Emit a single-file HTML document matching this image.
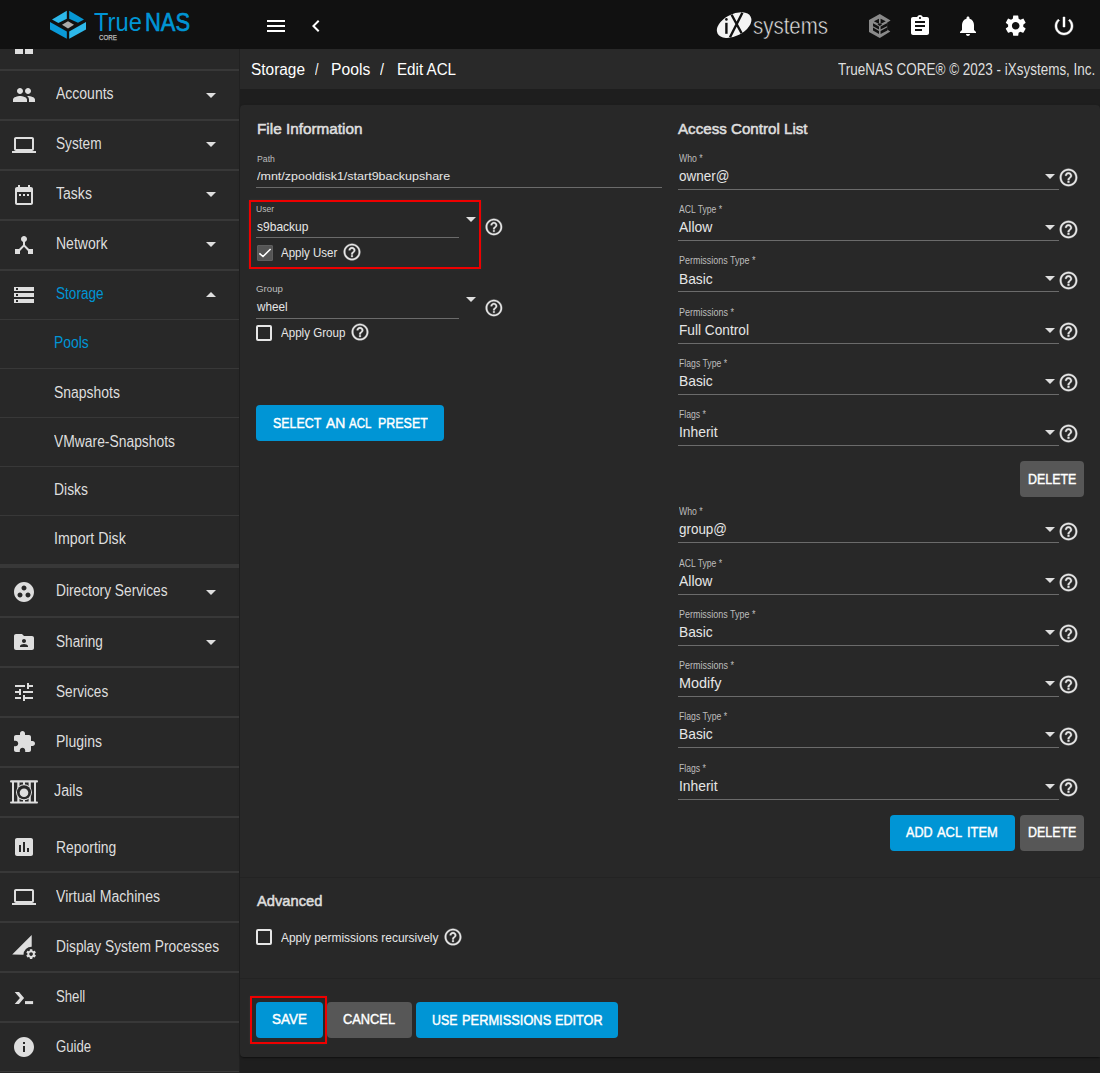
<!DOCTYPE html>
<html><head><meta charset="utf-8">
<style>
html,body{margin:0;padding:0;width:1100px;height:1073px;overflow:hidden;background:#1e1e1e;}
body{position:relative;font-family:"Liberation Sans",sans-serif;}
.t{position:absolute;white-space:nowrap;transform-origin:0 0;}
.b{position:absolute;}
.i{position:absolute;overflow:visible;}
</style></head><body>
<div class="b" style="left:0px;top:0px;width:1100px;height:1073px;background:#1e1e1e;"></div>
<div class="b" style="left:0px;top:48px;width:239px;height:1025px;background:#282828;"></div>
<div class="b" style="left:239px;top:48px;width:1px;height:1025px;background:#212121;"></div>
<div class="b" style="left:240px;top:48px;width:860px;height:41px;background:#292929;"></div>
<div class="b" style="left:240px;top:105px;width:860px;height:952px;background:#282828;border-radius:4px 4px 0 4px;box-shadow:0 2px 1px -1px rgba(0,0,0,.2),0 1px 1px 0 rgba(0,0,0,.14),0 1px 3px 0 rgba(0,0,0,.12);"></div>
<div class="b" style="left:0px;top:69px;width:239px;height:2px;background:#383838;"></div>
<div class="b" style="left:0px;top:119px;width:239px;height:2px;background:#383838;"></div>
<div class="b" style="left:0px;top:169px;width:239px;height:2px;background:#383838;"></div>
<div class="b" style="left:0px;top:219px;width:239px;height:2px;background:#383838;"></div>
<div class="b" style="left:0px;top:269px;width:239px;height:2px;background:#383838;"></div>
<div class="b" style="left:0px;top:616px;width:239px;height:2px;background:#383838;"></div>
<div class="b" style="left:0px;top:666px;width:239px;height:2px;background:#383838;"></div>
<div class="b" style="left:0px;top:716px;width:239px;height:2px;background:#383838;"></div>
<div class="b" style="left:0px;top:766px;width:239px;height:2px;background:#383838;"></div>
<div class="b" style="left:0px;top:816px;width:239px;height:2px;background:#383838;"></div>
<div class="b" style="left:0px;top:871px;width:239px;height:2px;background:#383838;"></div>
<div class="b" style="left:0px;top:921px;width:239px;height:2px;background:#383838;"></div>
<div class="b" style="left:0px;top:971px;width:239px;height:2px;background:#383838;"></div>
<div class="b" style="left:0px;top:1021px;width:239px;height:2px;background:#383838;"></div>
<div class="b" style="left:0px;top:319px;width:239px;height:1px;background:#383838;"></div>
<div class="b" style="left:0px;top:368px;width:239px;height:1px;background:#383838;"></div>
<div class="b" style="left:0px;top:417px;width:239px;height:1px;background:#383838;"></div>
<div class="b" style="left:0px;top:466px;width:239px;height:1px;background:#383838;"></div>
<div class="b" style="left:0px;top:515px;width:239px;height:1px;background:#383838;"></div>
<div class="b" style="left:0px;top:1071px;width:239px;height:1px;background:#383838;"></div>
<div class="b" style="left:0px;top:1072px;width:239px;height:1px;background:#252525;"></div>
<div class="b" style="left:0px;top:564px;width:239px;height:4px;background:#383838;"></div>
<svg class="i" style="left:12px;top:33px;width:24px;height:24px;" viewBox="0 0 24 24"><path fill="#dedede" d="M3 13h8V3H3v10zm0 8h8v-6H3v6zm10 0h8V11h-8v10zm0-18v6h8V3h-8z"/></svg>
<svg class="i" style="left:12px;top:82.6px;width:24px;height:24px;" viewBox="0 0 24 24"><path fill="#dedede" d="M16 11c1.66 0 2.99-1.34 2.99-3S17.66 5 16 5c-1.66 0-3 1.34-3 3s1.34 3 3 3zm-8 0c1.66 0 2.99-1.34 2.99-3S9.66 5 8 5C6.34 5 5 6.34 5 8s1.34 3 3 3zm0 2c-2.33 0-7 1.17-7 3.5V19h14v-2.5c0-2.33-4.67-3.5-7-3.5zm8 0c-.29 0-.62.02-.97.05 1.16.84 1.97 1.97 1.97 3.45V19h6v-2.5c0-2.33-4.67-3.5-7-3.5z"/></svg>
<div class="t" style="left:56.30px;top:84px;font-size:15.80px;line-height:19px;color:#dedede;transform:scaleX(0.8861);">Accounts</div>
<svg class="i" style="left:206px;top:93px;width:10px;height:5px" viewBox="0 0 10 5"><path fill="#dedede" d="M0 0h10L5 5z"/></svg>
<svg class="i" style="left:12px;top:133px;width:24px;height:24px;" viewBox="0 0 24 24"><path fill="#dedede" d="M20 18c1.1 0 1.99-.9 1.99-2L22 6c0-1.1-.9-2-2-2H4c-1.1 0-2 .9-2 2v10c0 1.1.9 2 2 2H0v2h24v-2h-4zM4 6h16v10H4V6z"/></svg>
<div class="t" style="left:56.40px;top:134px;font-size:15.80px;line-height:19px;color:#dedede;transform:scaleX(0.8655);">System</div>
<svg class="i" style="left:206px;top:142px;width:10px;height:5px" viewBox="0 0 10 5"><path fill="#dedede" d="M0 0h10L5 5z"/></svg>
<svg class="i" style="left:12px;top:183px;width:24px;height:24px;" viewBox="0 0 24 24"><path fill="#dedede" d="M9 11H7v2h2v-2zm4 0h-2v2h2v-2zm4 0h-2v2h2v-2zm2-7h-1V2h-2v2H8V2H6v2H5c-1.11 0-1.99.9-1.99 2L3 20c0 1.1.89 2 2 2h14c1.1 0 2-.9 2-2V6c0-1.1-.9-2-2-2zm0 16H5V9h14v11z"/></svg>
<div class="t" style="left:56.40px;top:184px;font-size:15.80px;line-height:19px;color:#dedede;transform:scaleX(0.8895);">Tasks</div>
<svg class="i" style="left:206px;top:192px;width:10px;height:5px" viewBox="0 0 10 5"><path fill="#dedede" d="M0 0h10L5 5z"/></svg>
<svg class="i" style="left:12px;top:233px;width:24px;height:24px;" viewBox="0 0 24 24"><path fill="#dedede" d="M17 16l-4-4V8.82C14.16 8.4 15 7.3 15 6c0-1.66-1.34-3-3-3S9 4.34 9 6c0 1.3.84 2.4 2 2.82V12l-4 4H3v5h5v-3.05l4-4.2 4 4.2V21h5v-5h-4z"/></svg>
<div class="t" style="left:56.40px;top:234px;font-size:15.80px;line-height:19px;color:#dedede;transform:scaleX(0.8871);">Network</div>
<svg class="i" style="left:206px;top:242px;width:10px;height:5px" viewBox="0 0 10 5"><path fill="#dedede" d="M0 0h10L5 5z"/></svg>
<svg class="i" style="left:12px;top:283px;width:24px;height:24px;" viewBox="0 0 24 24"><path fill="#dedede" d="M2 20h20v-4H2v4zm2-3h2v2H4v-2zM2 4v4h20V4H2zm4 3H4V5h2v2zm-4 7h20v-4H2v4zm2-3h2v2H4v-2z"/></svg>
<div class="t" style="left:56.40px;top:284px;font-size:15.80px;line-height:19px;color:#0095d5;transform:scaleX(0.8597);">Storage</div>
<svg class="i" style="left:206px;top:292px;width:10px;height:5px" viewBox="0 0 10 5"><path fill="#dedede" d="M0 5h10L5 0z"/></svg>
<svg class="i" style="left:12px;top:580px;width:24px;height:24px;" viewBox="0 0 24 24"><path fill="#dedede" d="M12 2C6.48 2 2 6.48 2 12s4.48 10 10 10 10-4.48 10-10S17.52 2 12 2zM8 17.5c-1.38 0-2.5-1.120-2.5-2.5s1.12-2.5 2.5-2.5 2.5 1.12 2.5 2.5-1.12 2.5-2.5 2.5zM9.5 8c0-1.38 1.12-2.5 2.5-2.5s2.5 1.12 2.5 2.5-1.12 2.5-2.5 2.5S9.5 9.38 9.5 8zm6.5 9.5c-1.38 0-2.5-1.12-2.5-2.5s1.12-2.5 2.5-2.5 2.5 1.12 2.5 2.5-1.12 2.5-2.5 2.5z"/></svg>
<div class="t" style="left:56.00px;top:581px;font-size:15.80px;line-height:19px;color:#dedede;transform:scaleX(0.8706);">Directory Services</div>
<svg class="i" style="left:206px;top:590px;width:10px;height:5px" viewBox="0 0 10 5"><path fill="#dedede" d="M0 0h10L5 5z"/></svg>
<svg class="i" style="left:12px;top:629.5px;width:24px;height:24px;" viewBox="0 0 24 24"><path fill="#dedede" d="M20 6h-8l-2-2H4c-1.1 0-1.99.9-1.99 2L2 18c0 1.1.9 2 2 2h16c1.1 0 2-.9 2-2V8c0-1.1-.9-2-2-2zm-8 3c1.1 0 2 .9 2 2s-.9 2-2 2-2-.9-2-2 .9-2 2-2zm4 8H8v-1c0-1.33 2.67-2 4-2s4 .67 4 2v1z"/></svg>
<div class="t" style="left:56.00px;top:632px;font-size:15.80px;line-height:19px;color:#dedede;transform:scaleX(0.8618);">Sharing</div>
<svg class="i" style="left:206px;top:640px;width:10px;height:5px" viewBox="0 0 10 5"><path fill="#dedede" d="M0 0h10L5 5z"/></svg>
<svg class="i" style="left:12px;top:679.6px;width:24px;height:24px;" viewBox="0 0 24 24"><path fill="#dedede" d="M3 17v2h6v-2H3zM3 5v2h10V5H3zm10 16v-2h8v-2h-8v-2h-2v6h2zM7 9v2H3v2h4v2h2V9H7zm14 4v-2H11v2h10zm-6-4h2V7h4V5h-4V3h-2v6z"/></svg>
<div class="t" style="left:56.00px;top:682px;font-size:15.80px;line-height:19px;color:#dedede;transform:scaleX(0.8616);">Services</div>
<svg class="i" style="left:12px;top:729.6px;width:24px;height:24px;" viewBox="0 0 24 24"><path fill="#dedede" d="M20.5 11H19V7c0-1.1-.9-2-2-2h-4V3.5C13 2.12 11.88 1 10.5 1S8 2.12 8 3.5V5H4c-1.1 0-1.99.9-1.99 2v3.8H3.5c1.49 0 2.7 1.21 2.7 2.7s-1.21 2.7-2.7 2.7H2V20c0 1.1.9 2 2 2h3.8v-1.5c0-1.49 1.21-2.7 2.7-2.7 1.49 0 2.7 1.21 2.7 2.7V22H17c1.1 0 2-.9 2-2v-4h1.5c1.38 0 2.5-1.12 2.5-2.5S21.88 11 20.5 11z"/></svg>
<div class="t" style="left:56.00px;top:732px;font-size:15.80px;line-height:19px;color:#dedede;transform:scaleX(0.8878);">Plugins</div>
<div class="t" style="left:54.30px;top:781px;font-size:15.80px;line-height:19px;color:#dedede;transform:scaleX(0.9052);">Jails</div>
<svg class="i" style="left:12px;top:834.5px;width:24px;height:24px;" viewBox="0 0 24 24"><path fill="#dedede" d="M19 3H5c-1.1 0-2 .9-2 2v14c0 1.1.9 2 2 2h14c1.1 0 2-.9 2-2V5c0-1.1-.9-2-2-2zM9 17H7v-7h2v7zm4 0h-2V7h2v10zm4 0h-2v-4h2v4z"/></svg>
<div class="t" style="left:56.00px;top:838px;font-size:15.80px;line-height:19px;color:#dedede;transform:scaleX(0.8805);">Reporting</div>
<svg class="i" style="left:12px;top:884.5px;width:24px;height:24px;" viewBox="0 0 24 24"><path fill="#dedede" d="M20 18c1.1 0 1.99-.9 1.99-2L22 6c0-1.1-.9-2-2-2H4c-1.1 0-2 .9-2 2v10c0 1.1.9 2 2 2H0v2h24v-2h-4zM4 6h16v10H4V6z"/></svg>
<div class="t" style="left:56.00px;top:887px;font-size:15.80px;line-height:19px;color:#dedede;transform:scaleX(0.8935);">Virtual Machines</div>
<div class="t" style="left:56.30px;top:937px;font-size:15.80px;line-height:19px;color:#dedede;transform:scaleX(0.8719);">Display System Processes</div>
<div class="t" style="left:56.30px;top:987px;font-size:15.80px;line-height:19px;color:#dedede;transform:scaleX(0.8336);">Shell</div>
<svg class="i" style="left:12px;top:1035px;width:24px;height:24px;" viewBox="0 0 24 24"><path fill="#dedede" d="M12 2C6.48 2 2 6.48 2 12s4.48 10 10 10 10-4.48 10-10S17.52 2 12 2zm1 15h-2v-6h2v6zm0-8h-2V7h2v2z"/></svg>
<div class="t" style="left:56.30px;top:1037px;font-size:15.80px;line-height:19px;color:#dedede;transform:scaleX(0.8346);">Guide</div>
<svg class="i" style="left:0;top:770px;width:48px;height:44px" viewBox="0 770 48 44"><rect x="10" y="780.3" width="28" height="2.1" rx="1" fill="#dedede"/><rect x="10" y="801.5" width="28" height="2.1" rx="1" fill="#dedede"/><rect x="12" y="782" width="2" height="20" fill="#dedede"/><rect x="17.3" y="782" width="2.2" height="20" fill="#dedede"/><rect x="23" y="782" width="2" height="20" fill="#dedede"/><rect x="28.6" y="782" width="2.2" height="20" fill="#dedede"/><rect x="34" y="782" width="2" height="20" fill="#dedede"/><circle cx="24" cy="792.3" r="8" fill="#dedede"/><circle cx="24" cy="792.3" r="7" fill="#282828"/><circle cx="24" cy="792.7" r="4.3" fill="#dedede"/></svg>
<svg class="i" style="left:8px;top:930px;width:32px;height:32px" viewBox="0 0 32 32"><path fill="#dedede" d="M4.2 24.6L23.7 4.9V16.7A8 8 0 0 0 15.5 24.7Z"/></svg>
<svg class="i" style="left:24.9px;top:947.8px;width:12.2px;height:12.2px;" viewBox="0 0 24 24"><path fill="#dedede" d="M19.14 12.94c.04-.3.06-.61.06-.94 0-.32-.02-.64-.07-.94l2.03-1.58c.18-.14.23-.41.12-.61l-1.92-3.32c-.12-.22-.37-.29-.59-.22l-2.39.96c-.5-.38-1.03-.7-1.62-.94l-.36-2.54c-.04-.24-.24-.41-.48-.41h-3.84c-.24 0-.43.17-.47.41l-.36 2.54c-.59.24-1.13.57-1.62.94l-2.39-.96c-.22-.08-.47 0-.59.22L2.740 8.870c-.12.21-.08.47.12.61l2.03 1.58c-.05.3-.09.63-.09.94s.02.64.07.94l-2.03 1.58c-.18.14-.23.41-.12.61l1.92 3.32c.12.22.37.29.59.22l2.39-.96c.5.38 1.03.7 1.62.94l.36 2.54c.05.24.24.41.48.41h3.84c.24 0 .44-.17.47-.41l.36-2.54c.59-.24 1.13-.56 1.62-.94l2.39.96c.22.08.47 0 .59-.22l1.92-3.32c.12-.22.07-.47-.12-.61l-2.01-1.58zM12 15.6c-1.98 0-3.6-1.62-3.6-3.6s1.62-3.6 3.6-3.6 3.6 1.62 3.6 3.6-1.62 3.6-3.6 3.6z"/></svg>
<svg class="i" style="left:8px;top:982px;width:32px;height:32px" viewBox="0 0 32 32"><path fill="#dedede" d="M6.7 10.1H11L16.1 16L11 21.9H6.7L11.9 16Z"/><rect x="17" y="19.1" width="8.1" height="3" fill="#dedede"/></svg>
<div class="t" style="left:54.00px;top:333px;font-size:15.80px;line-height:19px;color:#0095d5;transform:scaleX(0.8812);">Pools</div>
<div class="t" style="left:54.00px;top:383px;font-size:15.80px;line-height:19px;color:#dedede;transform:scaleX(0.8829);">Snapshots</div>
<div class="t" style="left:54.00px;top:432px;font-size:15.80px;line-height:19px;color:#dedede;transform:scaleX(0.8779);">VMware-Snapshots</div>
<div class="t" style="left:54.00px;top:480px;font-size:15.80px;line-height:19px;color:#dedede;transform:scaleX(0.8803);">Disks</div>
<div class="t" style="left:54.00px;top:529px;font-size:15.80px;line-height:19px;color:#dedede;transform:scaleX(0.8982);">Import Disk</div>
<div class="b" style="left:0px;top:0px;width:1100px;height:49px;background:#111111;"></div>
<svg class="i" style="left:0;top:0;width:100px;height:48px" viewBox="0 0 100 48"><path fill="#2db8ea" d="M52 19.6L66.8 10.8V18.8L58.4 23z"/><path fill="#0798d5" d="M69.2 10.8L84 19.6L78 22.8L69.2 18.8z"/><path fill="#0a9ad8" d="M50 22L66.8 31.6V38.8L50 29.6z"/><path fill="#2db8ea" d="M86 22V29.6L69.2 38.8V31.6z"/><path fill="#aaaaaa" d="M62 24.8L68 21.2L74 24.8L68 28.4z"/></svg>
<div class="t" style="left:94.10px;top:6px;font-size:26.38px;line-height:32px;color:#0095d5;transform:scaleX(0.8990);">True</div>
<div class="t" style="left:145.00px;top:6px;font-size:26.38px;line-height:32px;color:#0095d5;transform:scaleX(0.8302);-webkit-text-stroke:0.7px #0095d5;">NAS</div>
<div class="t" style="left:98.90px;top:34px;font-size:6.96px;line-height:8px;color:#bdbdbd;transform:scaleX(0.8904);-webkit-text-stroke:0.25px #bdbdbd;">CORE</div>
<svg class="i" style="left:264px;top:14px;width:24px;height:24px;" viewBox="0 0 24 24"><path fill="#ffffff" d="M3 18h18v-2H3v2zm0-5h18v-2H3v2zm0-7v2h18V6H3z"/></svg>
<svg class="i" style="left:304px;top:14px;width:24px;height:24px;" viewBox="0 0 24 24"><path fill="#ffffff" d="M15.41 7.41L14 6l-6 6 6 6 1.41-1.41L10.83 12z"/></svg>
<svg class="i" style="left:700px;top:0;width:60px;height:48px" viewBox="700 0 60 48"><ellipse cx="734.1" cy="25.1" rx="18.6" ry="10.9" transform="rotate(-27 734.1 25.1)" fill="#f4f4f4"/><path fill="#111" d="M725.2 22.8h2.4v11h-2.4z"/><circle cx="726.4" cy="19.4" r="1.3" fill="#111"/><path fill="none" stroke="#111" stroke-width="2.4" d="M731.6 14.8L741.6 33.2M742.4 12.8L730 37.2"/></svg>
<div class="t" style="left:753.00px;top:11px;font-size:24.06px;line-height:29px;color:#e6e6e6;transform:scaleX(0.8506);-webkit-text-stroke:0.55px #111111;">systems</div>
<svg class="i" style="left:864px;top:10px;width:32px;height:32px" viewBox="0 0 32 32"><path fill="#8a8a8a" d="M5 9.9L15.8 3.9L26.6 10.4L23.2 12.5V19.6L26.3 21.6L15.8 28L5 22z"/><path fill="#111" d="M9.9 11.3L15 8.8V13.9zM16.6 8.8L21.8 11.3L16.6 13.9zM13.5 14.6L15.8 13.3L18.1 14.6L15.8 15.9zM9 13.2L15 16.6V19.5L9 16.2zM9 17.6L15 21V24L9 20.6zM16.6 16.6L23.4 12.9V16.1L16.6 19.5zM16.6 21L23.4 17.3V20.5L16.6 24z"/></svg>
<svg class="i" style="left:908px;top:14px;width:24px;height:24px;" viewBox="0 0 24 24"><path fill="#ffffff" d="M19 3h-4.18C14.4 1.84 13.3 1 12 1c-1.3 0-2.4.84-2.82 2H5c-1.1 0-2 .9-2 2v14c0 1.1.9 2 2 2h14c1.1 0 2-.9 2-2V5c0-1.1-.9-2-2-2zm-7 0c.55 0 1 .45 1 1s-.45 1-1 1-1-.45-1-1 .45-1 1-1zm2 14H7v-2h7v2zm3-4H7v-2h10v2zm0-4H7V7h10v2z"/></svg>
<svg class="i" style="left:956px;top:14px;width:24px;height:24px;" viewBox="0 0 24 24"><path fill="#ffffff" d="M12 22c1.1 0 2-.9 2-2h-4c0 1.1.89 2 2 2zm6-6v-5c0-3.07-1.64-5.64-4.5-6.32V4c0-.83-.67-1.5-1.5-1.5s-1.5.67-1.5 1.5v.68C7.63 5.36 6 7.92 6 11v5l-2 2v1h16v-1l-2-2z"/></svg>
<svg class="i" style="left:1003.3px;top:13.3px;width:25.4px;height:25.4px;" viewBox="0 0 24 24"><path fill="#ffffff" d="M19.14 12.94c.04-.3.06-.61.06-.94 0-.32-.02-.64-.07-.94l2.03-1.58c.18-.14.23-.41.12-.61l-1.92-3.32c-.12-.22-.37-.29-.59-.22l-2.39.96c-.5-.38-1.03-.7-1.62-.94l-.36-2.54c-.04-.24-.24-.41-.48-.41h-3.84c-.24 0-.43.17-.47.41l-.36 2.54c-.59.24-1.13.57-1.62.94l-2.39-.96c-.22-.08-.47 0-.59.22L2.740 8.870c-.12.21-.08.47.12.61l2.03 1.58c-.05.3-.09.63-.09.94s.02.64.07.94l-2.03 1.58c-.18.14-.23.41-.12.61l1.92 3.32c.12.22.37.29.59.22l2.39-.96c.5.38 1.03.7 1.62.94l.36 2.54c.05.24.24.41.48.41h3.84c.24 0 .44-.17.47-.41l.36-2.54c.59-.24 1.13-.56 1.62-.94l2.39.96c.22.08.47 0 .59-.22l1.92-3.32c.12-.22.07-.47-.12-.61l-2.01-1.58zM12 15.6c-1.98 0-3.6-1.62-3.6-3.6s1.62-3.6 3.6-3.6 3.6 1.62 3.6 3.6-1.62 3.6-3.6 3.6z"/></svg>
<svg class="i" style="left:1052px;top:14px;width:24px;height:24px;" viewBox="0 0 24 24"><path fill="#ffffff" stroke="#ffffff" stroke-width="0.45" d="M13 3h-2v10h2V3zm4.83 2.17l-1.42 1.42C17.99 7.86 19 9.810 19 12c0 3.87-3.13 7-7 7s-7-3.13-7-7c0-2.19 1.01-4.14 2.58-5.42L6.17 5.17C4.23 6.82 3 9.26 3 12c0 4.97 4.030 9 9 9s9-4.03 9-9c0-2.74-1.23-5.18-3.17-6.83z"/></svg>
<div class="t" style="left:251.00px;top:60px;font-size:15.80px;line-height:19px;color:#ffffff;transform:scaleX(0.9753);">Storage</div>
<div class="t" style="left:315.00px;top:60px;font-size:15.80px;line-height:19px;color:#ffffff;transform:scaleX(0.7913);">/</div>
<div class="t" style="left:331.40px;top:60px;font-size:15.80px;line-height:19px;color:#ffffff;transform:scaleX(0.9926);">Pools</div>
<div class="t" style="left:380.00px;top:60px;font-size:15.80px;line-height:19px;color:#ffffff;transform:scaleX(0.9043);">/</div>
<div class="t" style="left:397.00px;top:60px;font-size:15.80px;line-height:19px;color:#ffffff;transform:scaleX(0.9601);">Edit ACL</div>
<div class="t" style="left:838.10px;top:60px;font-size:15.65px;line-height:19px;color:#dedede;transform:scaleX(0.8609);">TrueNAS CORE® © 2023 - iXsystems, Inc.</div>
<div class="t" style="left:257.00px;top:120px;font-size:15.36px;line-height:18px;color:#dedede;transform:scaleX(0.9958);-webkit-text-stroke:0.55px #dedede;">File Information</div>
<div class="t" style="left:678.40px;top:120px;font-size:15.36px;line-height:18px;color:#dedede;transform:scaleX(0.9855);-webkit-text-stroke:0.55px #dedede;">Access Control List</div>
<div class="t" style="left:256.50px;top:154px;font-size:9.28px;line-height:11px;color:#bdbdbd;transform:scaleX(0.9391);">Path</div>
<div class="t" style="left:256.50px;top:170px;font-size:11.01px;line-height:13px;color:#e6e6e6;transform:scaleX(1.1367);">/mnt/zpooldisk1/start9backupshare</div>
<div class="b" style="left:256px;top:187px;width:406px;height:1px;background:#6b6b6b;"></div>
<div class="b" style="left:249px;top:200px;width:232px;height:69px;box-sizing:border-box;border:2px solid #ee0000;box-shadow:0 0 3px rgba(255,255,255,.06);"></div>
<div class="t" style="left:256.00px;top:203px;font-size:9.71px;line-height:12px;color:#bdbdbd;transform:scaleX(0.8785);">User</div>
<div class="t" style="left:256.50px;top:219px;font-size:12.90px;line-height:15px;color:#e6e6e6;transform:scaleX(0.9329);">s9backup</div>
<div class="b" style="left:256px;top:237px;width:203px;height:1px;background:#6b6b6b;"></div>
<svg class="i" style="left:466px;top:217px;width:10px;height:5px" viewBox="0 0 10 5"><path fill="#dedede" d="M0 0h10L5 5z"/></svg>
<svg class="i" style="left:483.5px;top:217px;width:19.8px;height:19.8px;" viewBox="0 0 24 24"><path fill="#e6e6e6" stroke="#e6e6e6" stroke-width="0.35" d="M11 18h2v-2h-2v2zm1-16C6.48 2 2 6.48 2 12s4.48 10 10 10 10-4.480 10-10S17.52 2 12 2zm0 18c-4.41 0-8-3.59-8-8s3.59-8 8-8 8 3.59 8 8-3.59 8-8 8zm0-14c-2.21 0-4 1.79-4 4h2c0-1.1.9-2 2-2s2 .9 2 2c0 2-3 1.75-3 5h2c0-2.25 3-2.5 3-5 0-2.21-1.79-4-4-4z"/></svg>
<div class="b" style="left:257px;top:245px;width:16px;height:16px;box-sizing:border-box;background:#555555;border:1px solid #5e5e5e;border-radius:1px;"></div>
<svg class="i" style="left:257px;top:245px;width:16px;height:16px" viewBox="0 0 16 16"><path fill="none" stroke="#ffffff" stroke-width="1.6" d="M2.4 8.4L6 11.5L13.6 4"/></svg>
<div class="t" style="left:281.00px;top:245px;font-size:13.04px;line-height:16px;color:#e6e6e6;transform:scaleX(0.8827);">Apply User</div>
<svg class="i" style="left:342px;top:241.8px;width:20px;height:20px;" viewBox="0 0 24 24"><path fill="#e6e6e6" stroke="#e6e6e6" stroke-width="0.35" d="M11 18h2v-2h-2v2zm1-16C6.48 2 2 6.48 2 12s4.48 10 10 10 10-4.480 10-10S17.52 2 12 2zm0 18c-4.41 0-8-3.59-8-8s3.59-8 8-8 8 3.59 8 8-3.59 8-8 8zm0-14c-2.21 0-4 1.79-4 4h2c0-1.1.9-2 2-2s2 .9 2 2c0 2-3 1.75-3 5h2c0-2.25 3-2.5 3-5 0-2.21-1.79-4-4-4z"/></svg>
<div class="t" style="left:256.00px;top:283px;font-size:9.71px;line-height:12px;color:#bdbdbd;transform:scaleX(1.0002);">Group</div>
<div class="t" style="left:256.56px;top:299px;font-size:12.90px;line-height:15px;color:#e6e6e6;transform:scaleX(0.9084);">wheel</div>
<div class="b" style="left:256px;top:318px;width:203px;height:1px;background:#6b6b6b;"></div>
<svg class="i" style="left:466px;top:297px;width:10px;height:5px" viewBox="0 0 10 5"><path fill="#dedede" d="M0 0h10L5 5z"/></svg>
<svg class="i" style="left:483.5px;top:297.8px;width:19.8px;height:19.8px;" viewBox="0 0 24 24"><path fill="#e6e6e6" stroke="#e6e6e6" stroke-width="0.35" d="M11 18h2v-2h-2v2zm1-16C6.48 2 2 6.48 2 12s4.48 10 10 10 10-4.480 10-10S17.52 2 12 2zm0 18c-4.41 0-8-3.59-8-8s3.59-8 8-8 8 3.59 8 8-3.59 8-8 8zm0-14c-2.21 0-4 1.79-4 4h2c0-1.1.9-2 2-2s2 .9 2 2c0 2-3 1.75-3 5h2c0-2.25 3-2.5 3-5 0-2.21-1.79-4-4-4z"/></svg>
<div class="b" style="left:256px;top:325px;width:16px;height:16px;box-sizing:border-box;border:2px solid #e6e6e6;border-radius:2px;"></div>
<div class="t" style="left:281.00px;top:325px;font-size:13.04px;line-height:16px;color:#e6e6e6;transform:scaleX(0.8880);">Apply Group</div>
<svg class="i" style="left:349.6px;top:322.2px;width:20px;height:20px;" viewBox="0 0 24 24"><path fill="#e6e6e6" stroke="#e6e6e6" stroke-width="0.35" d="M11 18h2v-2h-2v2zm1-16C6.48 2 2 6.48 2 12s4.48 10 10 10 10-4.480 10-10S17.52 2 12 2zm0 18c-4.41 0-8-3.59-8-8s3.59-8 8-8 8 3.59 8 8-3.59 8-8 8zm0-14c-2.21 0-4 1.79-4 4h2c0-1.1.9-2 2-2s2 .9 2 2c0 2-3 1.75-3 5h2c0-2.25 3-2.5 3-5 0-2.21-1.79-4-4-4z"/></svg>
<div class="b" style="left:256px;top:405px;width:188px;height:36px;background:#0095d5;border-radius:4px;"></div>
<div class="t" style="left:273.20px;top:414px;font-size:15.22px;line-height:18px;color:#ffffff;transform:scaleX(0.8142);-webkit-text-stroke:0.45px #ffffff;">SELECT</div>
<div class="t" style="left:325.90px;top:414px;font-size:15.22px;line-height:18px;color:#ffffff;transform:scaleX(0.9124);-webkit-text-stroke:0.45px #ffffff;">AN</div>
<div class="t" style="left:348.50px;top:414px;font-size:15.22px;line-height:18px;color:#ffffff;transform:scaleX(0.7568);-webkit-text-stroke:0.45px #ffffff;">ACL</div>
<div class="t" style="left:378.00px;top:414px;font-size:15.22px;line-height:18px;color:#ffffff;transform:scaleX(0.8181);-webkit-text-stroke:0.45px #ffffff;">PRESET</div>
<div class="t" style="left:678.50px;top:152px;font-size:10.43px;line-height:13px;color:#bdbdbd;transform:scaleX(0.8335);">Who *</div>
<div class="t" style="left:678.50px;top:167px;font-size:14.78px;line-height:18px;color:#e6e6e6;transform:scaleX(0.9116);">owner@</div>
<div class="b" style="left:678px;top:189px;width:381px;height:1px;background:#6b6b6b;"></div>
<svg class="i" style="left:1045px;top:174px;width:10px;height:5px" viewBox="0 0 10 5"><path fill="#dedede" d="M0 0h10L5 5z"/></svg>
<svg class="i" style="left:1058px;top:167.2px;width:21px;height:21px;" viewBox="0 0 24 24"><path fill="#e6e6e6" stroke="#e6e6e6" stroke-width="0.35" d="M11 18h2v-2h-2v2zm1-16C6.48 2 2 6.48 2 12s4.48 10 10 10 10-4.480 10-10S17.52 2 12 2zm0 18c-4.41 0-8-3.59-8-8s3.59-8 8-8 8 3.59 8 8-3.59 8-8 8zm0-14c-2.21 0-4 1.79-4 4h2c0-1.1.9-2 2-2s2 .9 2 2c0 2-3 1.75-3 5h2c0-2.25 3-2.5 3-5 0-2.21-1.79-4-4-4z"/></svg>
<div class="t" style="left:678.50px;top:203px;font-size:10.43px;line-height:13px;color:#bdbdbd;transform:scaleX(0.8272);">ACL Type *</div>
<div class="t" style="left:678.50px;top:218px;font-size:14.78px;line-height:18px;color:#e6e6e6;transform:scaleX(0.9462);">Allow</div>
<div class="b" style="left:678px;top:240px;width:381px;height:1px;background:#6b6b6b;"></div>
<svg class="i" style="left:1045px;top:225px;width:10px;height:5px" viewBox="0 0 10 5"><path fill="#dedede" d="M0 0h10L5 5z"/></svg>
<svg class="i" style="left:1058px;top:218.5px;width:21px;height:21px;" viewBox="0 0 24 24"><path fill="#e6e6e6" stroke="#e6e6e6" stroke-width="0.35" d="M11 18h2v-2h-2v2zm1-16C6.48 2 2 6.48 2 12s4.48 10 10 10 10-4.480 10-10S17.52 2 12 2zm0 18c-4.41 0-8-3.59-8-8s3.59-8 8-8 8 3.59 8 8-3.59 8-8 8zm0-14c-2.21 0-4 1.79-4 4h2c0-1.1.9-2 2-2s2 .9 2 2c0 2-3 1.75-3 5h2c0-2.25 3-2.5 3-5 0-2.21-1.79-4-4-4z"/></svg>
<div class="t" style="left:678.50px;top:254px;font-size:10.43px;line-height:13px;color:#bdbdbd;transform:scaleX(0.8585);">Permissions Type *</div>
<div class="t" style="left:678.50px;top:270px;font-size:14.78px;line-height:18px;color:#e6e6e6;transform:scaleX(0.9324);">Basic</div>
<div class="b" style="left:678px;top:291px;width:381px;height:1px;background:#6b6b6b;"></div>
<svg class="i" style="left:1045px;top:276px;width:10px;height:5px" viewBox="0 0 10 5"><path fill="#dedede" d="M0 0h10L5 5z"/></svg>
<svg class="i" style="left:1058px;top:269.7px;width:21px;height:21px;" viewBox="0 0 24 24"><path fill="#e6e6e6" stroke="#e6e6e6" stroke-width="0.35" d="M11 18h2v-2h-2v2zm1-16C6.48 2 2 6.48 2 12s4.48 10 10 10 10-4.480 10-10S17.52 2 12 2zm0 18c-4.41 0-8-3.59-8-8s3.59-8 8-8 8 3.59 8 8-3.59 8-8 8zm0-14c-2.21 0-4 1.79-4 4h2c0-1.1.9-2 2-2s2 .9 2 2c0 2-3 1.75-3 5h2c0-2.25 3-2.5 3-5 0-2.21-1.79-4-4-4z"/></svg>
<div class="t" style="left:678.50px;top:306px;font-size:10.43px;line-height:13px;color:#bdbdbd;transform:scaleX(0.8635);">Permissions *</div>
<div class="t" style="left:678.50px;top:321px;font-size:14.78px;line-height:18px;color:#e6e6e6;transform:scaleX(0.9271);">Full Control</div>
<div class="b" style="left:678px;top:343px;width:381px;height:1px;background:#6b6b6b;"></div>
<svg class="i" style="left:1045px;top:328px;width:10px;height:5px" viewBox="0 0 10 5"><path fill="#dedede" d="M0 0h10L5 5z"/></svg>
<svg class="i" style="left:1058px;top:320.9px;width:21px;height:21px;" viewBox="0 0 24 24"><path fill="#e6e6e6" stroke="#e6e6e6" stroke-width="0.35" d="M11 18h2v-2h-2v2zm1-16C6.48 2 2 6.48 2 12s4.48 10 10 10 10-4.480 10-10S17.52 2 12 2zm0 18c-4.41 0-8-3.59-8-8s3.59-8 8-8 8 3.59 8 8-3.59 8-8 8zm0-14c-2.21 0-4 1.79-4 4h2c0-1.1.9-2 2-2s2 .9 2 2c0 2-3 1.75-3 5h2c0-2.25 3-2.5 3-5 0-2.21-1.79-4-4-4z"/></svg>
<div class="t" style="left:678.50px;top:357px;font-size:10.43px;line-height:13px;color:#bdbdbd;transform:scaleX(0.8338);">Flags Type *</div>
<div class="t" style="left:678.50px;top:372px;font-size:14.78px;line-height:18px;color:#e6e6e6;transform:scaleX(0.9352);">Basic</div>
<div class="b" style="left:678px;top:394px;width:381px;height:1px;background:#6b6b6b;"></div>
<svg class="i" style="left:1045px;top:379px;width:10px;height:5px" viewBox="0 0 10 5"><path fill="#dedede" d="M0 0h10L5 5z"/></svg>
<svg class="i" style="left:1058px;top:372.2px;width:21px;height:21px;" viewBox="0 0 24 24"><path fill="#e6e6e6" stroke="#e6e6e6" stroke-width="0.35" d="M11 18h2v-2h-2v2zm1-16C6.48 2 2 6.48 2 12s4.48 10 10 10 10-4.480 10-10S17.52 2 12 2zm0 18c-4.41 0-8-3.59-8-8s3.59-8 8-8 8 3.59 8 8-3.59 8-8 8zm0-14c-2.21 0-4 1.79-4 4h2c0-1.1.9-2 2-2s2 .9 2 2c0 2-3 1.75-3 5h2c0-2.25 3-2.5 3-5 0-2.21-1.79-4-4-4z"/></svg>
<div class="t" style="left:678.50px;top:408px;font-size:10.43px;line-height:13px;color:#bdbdbd;transform:scaleX(0.8320);">Flags *</div>
<div class="t" style="left:678.50px;top:423px;font-size:14.78px;line-height:18px;color:#e6e6e6;transform:scaleX(0.9393);">Inherit</div>
<div class="b" style="left:678px;top:445px;width:381px;height:1px;background:#6b6b6b;"></div>
<svg class="i" style="left:1045px;top:430px;width:10px;height:5px" viewBox="0 0 10 5"><path fill="#dedede" d="M0 0h10L5 5z"/></svg>
<svg class="i" style="left:1058px;top:423.4px;width:21px;height:21px;" viewBox="0 0 24 24"><path fill="#e6e6e6" stroke="#e6e6e6" stroke-width="0.35" d="M11 18h2v-2h-2v2zm1-16C6.48 2 2 6.48 2 12s4.48 10 10 10 10-4.480 10-10S17.52 2 12 2zm0 18c-4.41 0-8-3.59-8-8s3.59-8 8-8 8 3.59 8 8-3.59 8-8 8zm0-14c-2.21 0-4 1.79-4 4h2c0-1.1.9-2 2-2s2 .9 2 2c0 2-3 1.75-3 5h2c0-2.25 3-2.5 3-5 0-2.21-1.79-4-4-4z"/></svg>
<div class="t" style="left:678.50px;top:505px;font-size:10.43px;line-height:13px;color:#bdbdbd;transform:scaleX(0.8335);">Who *</div>
<div class="t" style="left:678.50px;top:520px;font-size:14.78px;line-height:18px;color:#e6e6e6;transform:scaleX(0.9083);">group@</div>
<div class="b" style="left:678px;top:542px;width:381px;height:1px;background:#6b6b6b;"></div>
<svg class="i" style="left:1045px;top:527px;width:10px;height:5px" viewBox="0 0 10 5"><path fill="#dedede" d="M0 0h10L5 5z"/></svg>
<svg class="i" style="left:1058px;top:520.6px;width:21px;height:21px;" viewBox="0 0 24 24"><path fill="#e6e6e6" stroke="#e6e6e6" stroke-width="0.35" d="M11 18h2v-2h-2v2zm1-16C6.48 2 2 6.48 2 12s4.48 10 10 10 10-4.480 10-10S17.52 2 12 2zm0 18c-4.41 0-8-3.59-8-8s3.59-8 8-8 8 3.59 8 8-3.59 8-8 8zm0-14c-2.21 0-4 1.79-4 4h2c0-1.1.9-2 2-2s2 .9 2 2c0 2-3 1.75-3 5h2c0-2.25 3-2.5 3-5 0-2.21-1.79-4-4-4z"/></svg>
<div class="t" style="left:678.50px;top:557px;font-size:10.43px;line-height:13px;color:#bdbdbd;transform:scaleX(0.8272);">ACL Type *</div>
<div class="t" style="left:678.50px;top:572px;font-size:14.78px;line-height:18px;color:#e6e6e6;transform:scaleX(0.9462);">Allow</div>
<div class="b" style="left:678px;top:594px;width:381px;height:1px;background:#6b6b6b;"></div>
<svg class="i" style="left:1045px;top:578px;width:10px;height:5px" viewBox="0 0 10 5"><path fill="#dedede" d="M0 0h10L5 5z"/></svg>
<svg class="i" style="left:1058px;top:571.9px;width:21px;height:21px;" viewBox="0 0 24 24"><path fill="#e6e6e6" stroke="#e6e6e6" stroke-width="0.35" d="M11 18h2v-2h-2v2zm1-16C6.48 2 2 6.48 2 12s4.48 10 10 10 10-4.480 10-10S17.52 2 12 2zm0 18c-4.41 0-8-3.59-8-8s3.59-8 8-8 8 3.59 8 8-3.59 8-8 8zm0-14c-2.21 0-4 1.79-4 4h2c0-1.1.9-2 2-2s2 .9 2 2c0 2-3 1.75-3 5h2c0-2.25 3-2.5 3-5 0-2.21-1.79-4-4-4z"/></svg>
<div class="t" style="left:678.50px;top:608px;font-size:10.43px;line-height:13px;color:#bdbdbd;transform:scaleX(0.8585);">Permissions Type *</div>
<div class="t" style="left:678.50px;top:623px;font-size:14.78px;line-height:18px;color:#e6e6e6;transform:scaleX(0.9324);">Basic</div>
<div class="b" style="left:678px;top:645px;width:381px;height:1px;background:#6b6b6b;"></div>
<svg class="i" style="left:1045px;top:630px;width:10px;height:5px" viewBox="0 0 10 5"><path fill="#dedede" d="M0 0h10L5 5z"/></svg>
<svg class="i" style="left:1058px;top:623.1px;width:21px;height:21px;" viewBox="0 0 24 24"><path fill="#e6e6e6" stroke="#e6e6e6" stroke-width="0.35" d="M11 18h2v-2h-2v2zm1-16C6.48 2 2 6.48 2 12s4.48 10 10 10 10-4.480 10-10S17.52 2 12 2zm0 18c-4.41 0-8-3.59-8-8s3.59-8 8-8 8 3.59 8 8-3.59 8-8 8zm0-14c-2.21 0-4 1.79-4 4h2c0-1.1.9-2 2-2s2 .9 2 2c0 2-3 1.75-3 5h2c0-2.25 3-2.5 3-5 0-2.21-1.79-4-4-4z"/></svg>
<div class="t" style="left:678.50px;top:659px;font-size:10.43px;line-height:13px;color:#bdbdbd;transform:scaleX(0.8635);">Permissions *</div>
<div class="t" style="left:678.50px;top:674px;font-size:14.78px;line-height:18px;color:#e6e6e6;transform:scaleX(0.9762);">Modify</div>
<div class="b" style="left:678px;top:696px;width:381px;height:1px;background:#6b6b6b;"></div>
<svg class="i" style="left:1045px;top:681px;width:10px;height:5px" viewBox="0 0 10 5"><path fill="#dedede" d="M0 0h10L5 5z"/></svg>
<svg class="i" style="left:1058px;top:674.4px;width:21px;height:21px;" viewBox="0 0 24 24"><path fill="#e6e6e6" stroke="#e6e6e6" stroke-width="0.35" d="M11 18h2v-2h-2v2zm1-16C6.48 2 2 6.48 2 12s4.48 10 10 10 10-4.480 10-10S17.52 2 12 2zm0 18c-4.41 0-8-3.59-8-8s3.59-8 8-8 8 3.59 8 8-3.59 8-8 8zm0-14c-2.21 0-4 1.79-4 4h2c0-1.1.9-2 2-2s2 .9 2 2c0 2-3 1.75-3 5h2c0-2.25 3-2.5 3-5 0-2.21-1.79-4-4-4z"/></svg>
<div class="t" style="left:678.50px;top:710px;font-size:10.43px;line-height:13px;color:#bdbdbd;transform:scaleX(0.8338);">Flags Type *</div>
<div class="t" style="left:678.50px;top:725px;font-size:14.78px;line-height:18px;color:#e6e6e6;transform:scaleX(0.9352);">Basic</div>
<div class="b" style="left:678px;top:747px;width:381px;height:1px;background:#6b6b6b;"></div>
<svg class="i" style="left:1045px;top:732px;width:10px;height:5px" viewBox="0 0 10 5"><path fill="#dedede" d="M0 0h10L5 5z"/></svg>
<svg class="i" style="left:1058px;top:725.6px;width:21px;height:21px;" viewBox="0 0 24 24"><path fill="#e6e6e6" stroke="#e6e6e6" stroke-width="0.35" d="M11 18h2v-2h-2v2zm1-16C6.48 2 2 6.48 2 12s4.48 10 10 10 10-4.480 10-10S17.52 2 12 2zm0 18c-4.41 0-8-3.59-8-8s3.59-8 8-8 8 3.59 8 8-3.59 8-8 8zm0-14c-2.21 0-4 1.79-4 4h2c0-1.1.9-2 2-2s2 .9 2 2c0 2-3 1.75-3 5h2c0-2.25 3-2.5 3-5 0-2.21-1.79-4-4-4z"/></svg>
<div class="t" style="left:678.50px;top:762px;font-size:10.43px;line-height:13px;color:#bdbdbd;transform:scaleX(0.8320);">Flags *</div>
<div class="t" style="left:678.50px;top:777px;font-size:14.78px;line-height:18px;color:#e6e6e6;transform:scaleX(0.9393);">Inherit</div>
<div class="b" style="left:678px;top:799px;width:381px;height:1px;background:#6b6b6b;"></div>
<svg class="i" style="left:1045px;top:784px;width:10px;height:5px" viewBox="0 0 10 5"><path fill="#dedede" d="M0 0h10L5 5z"/></svg>
<svg class="i" style="left:1058px;top:776.9px;width:21px;height:21px;" viewBox="0 0 24 24"><path fill="#e6e6e6" stroke="#e6e6e6" stroke-width="0.35" d="M11 18h2v-2h-2v2zm1-16C6.48 2 2 6.48 2 12s4.48 10 10 10 10-4.480 10-10S17.52 2 12 2zm0 18c-4.41 0-8-3.59-8-8s3.59-8 8-8 8 3.59 8 8-3.59 8-8 8zm0-14c-2.21 0-4 1.79-4 4h2c0-1.1.9-2 2-2s2 .9 2 2c0 2-3 1.75-3 5h2c0-2.25 3-2.5 3-5 0-2.21-1.79-4-4-4z"/></svg>
<div class="b" style="left:1020px;top:461px;width:64px;height:36px;background:#575757;border-radius:4px;"></div>
<div class="t" style="left:1027.60px;top:470px;font-size:15.22px;line-height:18px;color:#ffffff;transform:scaleX(0.8176);-webkit-text-stroke:0.45px #ffffff;">DELETE</div>
<div class="b" style="left:890px;top:815px;width:125px;height:36px;background:#0095d5;border-radius:4px;"></div>
<div class="t" style="left:906.10px;top:823px;font-size:15.22px;line-height:18px;color:#ffffff;transform:scaleX(0.8253);-webkit-text-stroke:0.45px #ffffff;">ADD</div>
<div class="t" style="left:937.30px;top:823px;font-size:15.22px;line-height:18px;color:#ffffff;transform:scaleX(0.8480);-webkit-text-stroke:0.45px #ffffff;">ACL</div>
<div class="t" style="left:967.10px;top:823px;font-size:15.22px;line-height:18px;color:#ffffff;transform:scaleX(0.8469);-webkit-text-stroke:0.45px #ffffff;">ITEM</div>
<div class="b" style="left:1020px;top:815px;width:64px;height:36px;background:#575757;border-radius:4px;"></div>
<div class="t" style="left:1027.60px;top:823px;font-size:15.22px;line-height:18px;color:#ffffff;transform:scaleX(0.8176);-webkit-text-stroke:0.45px #ffffff;">DELETE</div>
<div class="b" style="left:240px;top:877px;width:860px;height:1px;background:#232323;"></div>
<div class="t" style="left:257.00px;top:892px;font-size:15.36px;line-height:18px;color:#dedede;transform:scaleX(0.9581);-webkit-text-stroke:0.55px #dedede;">Advanced</div>
<div class="b" style="left:256px;top:929px;width:16px;height:16px;box-sizing:border-box;border:2px solid #e6e6e6;border-radius:2px;"></div>
<div class="t" style="left:281.00px;top:930px;font-size:13.04px;line-height:16px;color:#e6e6e6;transform:scaleX(0.9174);">Apply permissions recursively</div>
<svg class="i" style="left:443.2px;top:927px;width:20px;height:20px;" viewBox="0 0 24 24"><path fill="#e6e6e6" stroke="#e6e6e6" stroke-width="0.35" d="M11 18h2v-2h-2v2zm1-16C6.48 2 2 6.48 2 12s4.48 10 10 10 10-4.480 10-10S17.52 2 12 2zm0 18c-4.41 0-8-3.59-8-8s3.59-8 8-8 8 3.59 8 8-3.59 8-8 8zm0-14c-2.21 0-4 1.79-4 4h2c0-1.1.9-2 2-2s2 .9 2 2c0 2-3 1.75-3 5h2c0-2.25 3-2.5 3-5 0-2.21-1.79-4-4-4z"/></svg>
<div class="b" style="left:240px;top:978px;width:860px;height:1px;background:#232323;"></div>
<div class="b" style="left:250px;top:996px;width:77px;height:48px;box-sizing:border-box;border:2px solid #ee0000;box-shadow:0 0 3px rgba(255,255,255,.06);"></div>
<div class="b" style="left:256px;top:1002px;width:67px;height:36px;background:#0095d5;border-radius:4px;"></div>
<div class="t" style="left:272.00px;top:1010px;font-size:15.22px;line-height:18px;color:#ffffff;transform:scaleX(0.8863);-webkit-text-stroke:0.45px #ffffff;">SAVE</div>
<div class="b" style="left:327px;top:1002px;width:85px;height:36px;background:#575757;border-radius:4px;"></div>
<div class="t" style="left:343.00px;top:1010px;font-size:15.22px;line-height:18px;color:#ffffff;transform:scaleX(0.8427);-webkit-text-stroke:0.45px #ffffff;">CANCEL</div>
<div class="b" style="left:416px;top:1002px;width:202px;height:36px;background:#0095d5;border-radius:4px;"></div>
<div class="t" style="left:432.10px;top:1011px;font-size:15.22px;line-height:18px;color:#ffffff;transform:scaleX(0.8122);-webkit-text-stroke:0.45px #ffffff;">USE</div>
<div class="t" style="left:461.50px;top:1011px;font-size:15.22px;line-height:18px;color:#ffffff;transform:scaleX(0.8440);-webkit-text-stroke:0.45px #ffffff;">PERMISSIONS</div>
<div class="t" style="left:554.80px;top:1011px;font-size:15.22px;line-height:18px;color:#ffffff;transform:scaleX(0.8302);-webkit-text-stroke:0.45px #ffffff;">EDITOR</div>
</body></html>
